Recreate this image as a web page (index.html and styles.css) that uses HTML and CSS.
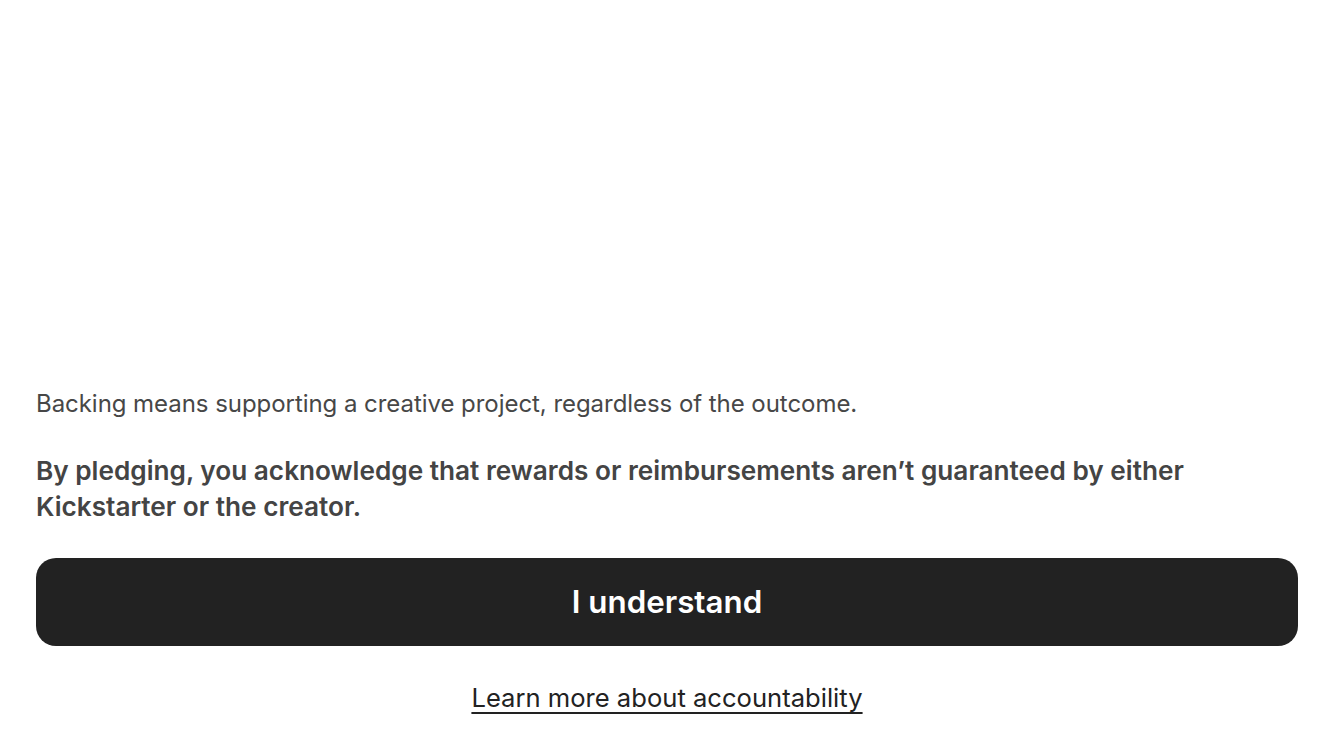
FILE: index.html
```html
<!DOCTYPE html>
<html>
<head>
<meta charset="utf-8">
<link rel="stylesheet" href="styles.css">
</head>
<body>
<main class="sheet">
  <p class="lead">Backing means supporting a creative project, regardless of the outcome.</p>
  <p class="strong">By pledging, you acknowledge that rewards or reimbursements aren’t guaranteed by either Kickstarter or the creator.</p>
  <button class="primary">I understand</button>
  <a class="link" href="#">Learn more about accountability</a>
</main>
</body>
</html>
```

FILE: styles.css
```css
html, body {
  margin: 0;
  padding: 0;
  background: #ffffff;
}
.sheet {
  box-sizing: border-box;
  height: 750px;
  display: flex;
  flex-direction: column;
  justify-content: flex-end;
  padding: 0 36px 34px;
  font-family: Inter, "Noto Sans", sans-serif;
  color: #3c3c3c;
}
.lead {
  margin: 0 0 33px;
  font-size: 24px;
  line-height: 32px;
  letter-spacing: -0.05px;
  color: #474747;
}
.strong {
  margin: 0 0 33px;
  font-size: 26.2px;
  line-height: 36px;
  font-weight: 600;
  color: #444444;
}
.primary {
  height: 88px;
  border: none;
  border-radius: 20px;
  background: #222222;
  color: #ffffff;
  font-family: inherit;
  font-size: 31.3px;
  font-weight: 600;
  margin: 0 0 34px;
}
.link {
  align-self: center;
  font-size: 25.6px;
  line-height: 36px;
  color: #222222;
  text-decoration: underline;
  text-underline-offset: 5px;
  text-decoration-thickness: 2px;
}
```
